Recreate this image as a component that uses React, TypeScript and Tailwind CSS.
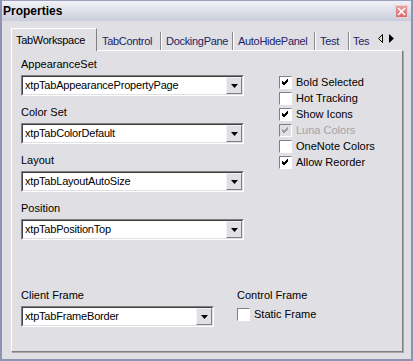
import React from "react";

const font = { fontFamily: '"Liberation Sans", Arial, sans-serif' };

function Check({ checked, disabled }: { checked?: boolean; disabled?: boolean }) {
  return (
    <div
      className={`flex h-[13px] w-[13px] items-center justify-center border border-t-[#808080] border-l-[#808080] border-b-white border-r-white ${
        disabled ? "bg-[#e0dfe3]" : "bg-white"
      }`}
    >
      {checked && (
        <svg width="9" height="9" viewBox="0 0 9 9">
          <path
            d="M1 4 L3 6 L7 2 M1 5 L3 7 L7 3 M1 3 L3 5 L7 1"
            stroke={disabled ? "#a0a0a0" : "#000"}
            strokeWidth="1"
            fill="none"
          />
        </svg>
      )}
    </div>
  );
}

function CheckRow({ label, checked, disabled }: { label: string; checked?: boolean; disabled?: boolean }) {
  return (
    <div className="flex h-[16px] items-center">
      <Check checked={checked} disabled={disabled} />
      <span className={`ml-[4px] text-[11px] leading-[13px] ${disabled ? "text-[#a3a2a8]" : "text-black"}`}>{label}</span>
    </div>
  );
}

function Combo({ value, w }: { value: string; w: string }) {
  return (
    <div className={`flex h-[21px] ${w} border border-t-[#808080] border-l-[#808080] border-b-white border-r-white`}>
      <div className="flex flex-1 items-center border border-t-[#404040] border-l-[#404040] border-b-[#e0dfe3] border-r-[#e0dfe3] bg-white">
        <div className="flex-1 overflow-hidden whitespace-nowrap pl-[2px] text-[11px] leading-[13px] tracking-[-0.2px] text-black">{value}</div>
        <div className="flex h-[17px] w-[16px] items-center justify-center border border-t-[#f4f4f4] border-l-[#f4f4f4] border-b-[#808080] border-r-[#808080] bg-[#e0dfe3]">
          <svg width="7" height="4" viewBox="0 0 7 4">
            <path d="M0 0 H7 L3.5 4 Z" fill="#000" />
          </svg>
        </div>
      </div>
    </div>
  );
}

function Field({ label, value }: { label: string; value: string }) {
  return (
    <div className="flex flex-col">
      <div className="h-[13px] text-[11px] leading-[13px] text-black">{label}</div>
      <div className="mt-[4px]">
        <Combo value={value} w="w-[223px]" />
      </div>
    </div>
  );
}

export default function App() {
  return (
    <div
      style={font}
      className="flex h-[361px] w-[413px] flex-col border-x-[2px] border-b-[2px] border-x-[#8c93b3] border-b-[#8c93b3] bg-[#e0dfe3]"
    >
      {/* Title bar */}
      <div className="flex h-[21px] shrink-0 items-center justify-between border-t border-[#9aa1c0] bg-gradient-to-b from-[#f2f2f6] to-[#c9ccdb] pl-[1px] pr-[3px]">
        <span className="text-[12px] font-bold leading-[14px] text-black">Properties</span>
        <div className="flex h-[13px] w-[13px] items-center justify-center border border-[#f0d0d0] bg-gradient-to-b from-[#e9a0a0] to-[#d86a6a]">
          <svg width="9" height="9" viewBox="0 0 9 9">
            <path d="M1 1 L8 8 M8 1 L1 8" stroke="#fff" strokeWidth="1.6" />
          </svg>
        </div>
      </div>

      {/* Body */}
      <div className="flex flex-1 flex-col pl-[9px] pr-[8px] pt-[7px] pb-[7px]">
        {/* Tab strip */}
        <div className="flex h-[22px] shrink-0 items-end whitespace-nowrap text-[11px] leading-[13px] tracking-[-0.3px]">
          <div className="relative z-10 -mb-px flex h-[23px] w-[86px] items-center border-l border-t border-r border-l-white border-t-white border-r-[#808080] bg-[#e0dfe3] pl-[4px] text-black">
            TabWorkspace
          </div>
          <div className="flex h-[18px] w-[64px] items-center border-r border-r-[#8a8a8a] pl-[5px] text-[#1e2466]">TabControl</div>
          <div className="flex h-[18px] w-[72px] items-center border-l border-r border-l-white border-r-[#8a8a8a] pl-[4px] text-[#1e2466]">DockingPane</div>
          <div className="flex h-[18px] w-[82px] items-center border-l border-r border-l-white border-r-[#8a8a8a] pl-[4px] text-[#1e2466]">AutoHidePanel</div>
          <div className="flex h-[18px] w-[34px] items-center border-l border-r border-l-white border-r-[#8a8a8a] pl-[4px] text-[#1e2466]">Test</div>
          <div className="flex h-[18px] w-[25px] items-center border-l border-l-white pl-[3px] text-[#1e2466]">Tes</div>
          <div className="flex h-[22px] flex-1 items-center gap-[6px] pl-[4px] pb-[2px]">
            <svg width="5" height="9" viewBox="0 0 5 9">
              <path d="M4.5 0.5 L0.5 4.5 L4.5 8.5 Z" fill="none" stroke="#000" strokeWidth="1" />
            </svg>
            <svg width="5" height="9" viewBox="0 0 5 9">
              <path d="M0 0 L5 4.5 L0 9 Z" fill="#000" />
            </svg>
          </div>
        </div>

        {/* Page */}
        <div className="flex flex-1 flex-col border-l border-t border-l-white border-t-white border-r border-b border-r-[#808080] border-b-[#808080] shadow-[1px_1px_0_#a6a6a6] pl-[9px] pt-[7px]">
          <div className="flex">
            <div className="flex w-[223px] flex-col gap-[10px]">
              <Field label="AppearanceSet" value="xtpTabAppearancePropertyPage" />
              <Field label="Color Set" value="xtpTabColorDefault" />
              <Field label="Layout" value="xtpTabLayoutAutoSize" />
              <Field label="Position" value="xtpTabPositionTop" />
            </div>
            <div className="ml-[35px] mt-[16px] flex flex-col">
              <CheckRow label="Bold Selected" checked />
              <CheckRow label="Hot Tracking" />
              <CheckRow label="Show Icons" checked />
              <CheckRow label="Luna Colors" checked disabled />
              <CheckRow label="OneNote Colors" />
              <CheckRow label="Allow Reorder" checked />
            </div>
          </div>

          <div className="mt-[49px] flex">
            <div className="flex flex-col">
              <div className="h-[13px] text-[11px] leading-[13px] text-black">Client Frame</div>
              <div className="mt-[4px]">
                <Combo value="xtpTabFrameBorder" w="w-[193px]" />
              </div>
            </div>
            <div className="ml-[23px] flex flex-col">
              <div className="h-[13px] text-[11px] leading-[13px] text-black">Control Frame</div>
              <div className="mt-[4px]">
                <CheckRow label="Static Frame" />
              </div>
            </div>
          </div>
        </div>
      </div>
    </div>
  );
}
